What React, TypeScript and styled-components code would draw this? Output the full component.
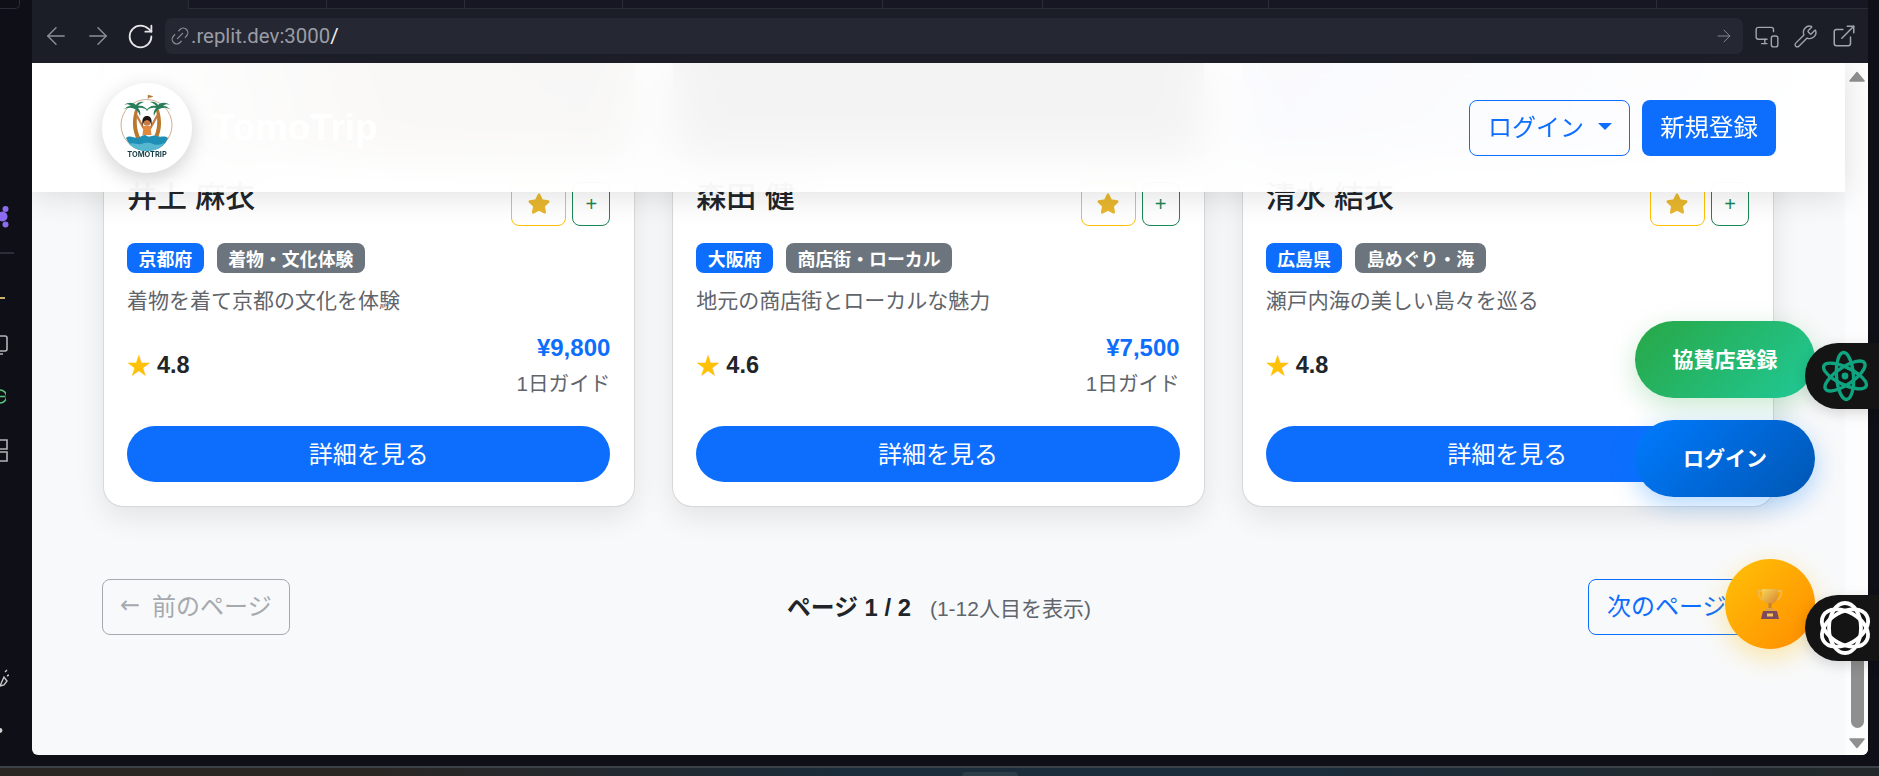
import React from "react"
import styled, { createGlobalStyle } from "styled-components"
import { ArrowLeft, ArrowRight, ExternalLink, Link2, MonitorSmartphone, RotateCw, Wrench } from "lucide-react"

const fontStack = `"Liberation Sans", "Noto Sans CJK JP", sans-serif`

const GlobalStyle = createGlobalStyle`
  html, body {
    margin: 0;
    padding: 0;
    background: #0e0f17;
    overflow: hidden;
    font-family: ${fontStack};
  }
  * {
    box-sizing: border-box;
  }
`

const Shell = styled.div`
  position: relative;
  width: 1879px;
  height: 776px;
  display: flex;
  flex-direction: column;
  overflow: hidden;
  background: #0e0f17;
`

const Desk = styled.div`
  flex: 1;
  min-height: 0;
  display: flex;
  padding-right: 11px;
  padding-bottom: 11px;
`

const Rail = styled.aside`
  width: 32px;
  flex: none;
  overflow: hidden;
  display: flex;
  flex-direction: column;
  align-items: flex-start;
`

const RailTab = styled.div`
  width: 20px;
  height: 9px;
  border: 1px solid #2a2c38;
  border-top: 0;
  border-left: 0;
  border-bottom-right-radius: 5px;
`

const RailIcon = styled.svg<{ $top: number }>`
  display: block;
  flex: none;
  margin-top: ${(p) => p.$top}px;
`

const Pane = styled.div`
  flex: 1;
  min-width: 0;
  display: flex;
  flex-direction: column;
`

const TabStrip = styled.div`
  height: 9px;
  flex: none;
  display: flex;
  background: #161722;
`

const ActiveTab = styled.div`
  width: 156px;
  background: #1b1d27;
`

const TabCell = styled.div<{ $w: number }>`
  width: ${(p) => p.$w}px;
  flex: none;
  border-left: 1px solid #2a2c38;
  border-bottom: 1px solid #2a2c38;
`

const AddressBar = styled.div`
  height: 54px;
  flex: none;
  display: flex;
  align-items: center;
  padding: 0 11px 0 10px;
  background: #1b1d27;
  color: #8d9099;
`

const NavButton = styled.div<{ $w: number }>`
  width: ${(p) => p.$w}px;
  flex: none;
  display: flex;
  align-items: center;
  color: #8d9099;
`

const ReloadButton = styled(NavButton)`
  color: #e4e5e8;
`

const UrlField = styled.div`
  flex: 1;
  height: 36px;
  margin-right: 11px;
  padding: 0 9px 0 4px;
  display: flex;
  align-items: center;
  background: #252832;
  border-radius: 7px;
`

const UrlText = styled.span`
  flex: 1;
  font-family: "Roboto", sans-serif;
  font-size: 20.4px;
  color: #9a9ca5;
`

const UrlSlash = styled.span`
  color: #f2f2f2;
`

const BarTools = styled.div`
  display: flex;
  align-items: center;
  gap: 13px;
  color: #a3a5ad;
`

const Viewport = styled.div`
  position: relative;
  flex: 1;
  min-height: 0;
  display: flex;
  overflow: hidden;
  background: #f8f9fa;
  border-bottom-left-radius: 6px;
  border-bottom-right-radius: 6px;
`

const Page = styled.main`
  flex: 1;
  min-width: 0;
  overflow: hidden;
  padding: 0 71px;
`

const Track = styled.div`
  width: 23px;
  flex: none;
  display: flex;
  flex-direction: column;
  align-items: center;
  padding: 8px 0 6px 1px;
  background: #fdfdfd;
`

const Thumb = styled.div`
  width: 13px;
  height: 108px;
  margin-top: auto;
  margin-bottom: 10px;
  background: #8f8f8f;
  border-radius: 0 0 7px 7px;
`

const TopHeader = styled.header`
  position: absolute;
  top: 0;
  left: 0;
  right: 23px;
  height: 129px;
  display: flex;
  align-items: center;
  padding: 0 69px 0 70px;
  background: rgba(255, 255, 255, 0.92);
  backdrop-filter: blur(22px);
  box-shadow: 0 4px 30px rgba(0, 0, 0, 0.12);
`

const LogoDisc = styled.div`
  width: 90px;
  height: 90px;
  flex: none;
  border-radius: 50%;
  background: #fff;
  box-shadow: 0 6px 20px rgba(0, 0, 0, 0.18);
`

const Brand = styled.div`
  margin-left: 21px;
  flex: 1;
  font-size: 36.7px;
  font-weight: 700;
  color: #fff;
`

const HeaderActions = styled.div`
  display: flex;
  gap: 12px;
`

const LoginButton = styled.button`
  height: 56px;
  width: 161px;
  padding: 0 0 5px 18px;
  display: flex;
  align-items: center;
  background: transparent;
  border: 1.5px solid #0d6efd;
  border-radius: 8px;
  color: #0d6efd;
  font-family: ${fontStack};
  font-size: 24px;
`

const Caret = styled.span`
  margin-left: 14px;
  margin-top: 3px;
  width: 0;
  height: 0;
  border-left: 7px solid transparent;
  border-right: 7px solid transparent;
  border-top: 7px solid #0d6efd;
`

const RegisterButton = styled.button`
  height: 56px;
  width: 134px;
  padding: 0 0 5px;
  background: #0d6efd;
  border: 0;
  border-radius: 8px;
  color: #fff;
  font-family: ${fontStack};
  font-size: 24.4px;
`

const CardGrid = styled.section`
  display: grid;
  grid-template-columns: repeat(3, 1fr);
  gap: 37px;
`

const Card = styled.article`
  overflow: hidden;
  background: #fff;
  border: 1px solid #d8d8d8;
  border-top: 0;
  border-radius: 0 0 20px 20px;
  box-shadow: 0 10px 30px rgba(0, 0, 0, 0.09);
`

const CardImage = styled.div<{ $tone: string }>`
  height: 95px;
  background: ${(p) => p.$tone};
`

const CardBody = styled.div`
  padding: 24px 24px 24px 23px;
`

const NameRow = styled.div`
  height: 44px;
  display: flex;
  align-items: center;
  gap: 6px;
`

const GuideName = styled.h3`
  flex: 1;
  margin: 0 0 14px;
  font-size: 30px;
  font-weight: 500;
  line-height: 30px;
  color: #212529;
`

const IconButton = styled.button<{ $accent: string; $w: number }>`
  width: ${(p) => p.$w}px;
  height: 44px;
  padding: 0;
  display: flex;
  align-items: center;
  justify-content: center;
  background: transparent;
  border: 1px solid ${(p) => p.$accent};
  border-radius: 8px;
  color: ${(p) => p.$accent};
  font-family: ${fontStack};
  font-size: 20px;
`

const Badges = styled.div`
  margin-top: 17px;
  display: flex;
  gap: 13px;
`

const Badge = styled.span<{ $bg: string }>`
  height: 30px;
  padding: 0 11.5px 1px;
  display: flex;
  align-items: center;
  background: ${(p) => p.$bg};
  border-radius: 8px;
  color: #fff;
  font-size: 17.9px;
  font-weight: 700;
`

const Description = styled.p`
  margin: 13px 0 0;
  font-size: 21px;
  line-height: 30px;
  color: #5f656b;
`

const CardFooter = styled.div`
  margin-top: 14px;
  display: flex;
  align-items: center;
  justify-content: space-between;
`

const Rating = styled.div`
  display: flex;
  align-items: center;
  gap: 6px;
  padding-bottom: 1px;
  font-size: 23.5px;
  font-weight: 700;
  color: #212529;
`

const RatingStar = styled.span`
  margin-bottom: 3px;
  font-family: "Noto Sans CJK JP", sans-serif;
  font-size: 24px;
  font-weight: 400;
  line-height: 1;
  color: #ffc107;
`

const PriceBlock = styled.div`
  text-align: right;
`

const Price = styled.div`
  font-size: 24px;
  font-weight: 700;
  line-height: 36px;
  color: #0d6efd;
`

const PriceUnit = styled.div`
  font-size: 20.6px;
  line-height: 36px;
  color: #5f656b;
`

const DetailButton = styled.button`
  display: block;
  width: 100%;
  height: 56px;
  margin-top: 24px;
  padding: 0 0 4px;
  background: #0d6efd;
  border: 0;
  border-radius: 28px;
  color: #fff;
  font-family: ${fontStack};
  font-size: 24px;
`

const Pager = styled.nav`
  margin: 72px -2px 0 -1px;
  display: flex;
  align-items: center;
  justify-content: space-between;
`

const PagerButton = styled.button<{ $disabled?: boolean }>`
  width: 188px;
  height: 56px;
  padding: 0 0 5px ${(p) => (p.$disabled ? 17 : 18)}px;
  display: flex;
  align-items: center;
  gap: ${(p) => (p.$disabled ? 12 : 6)}px;
  background: transparent;
  border: 1px solid ${(p) => (p.$disabled ? "#a6a9ae" : "#0d6efd")};
  border-radius: 8px;
  color: ${(p) => (p.$disabled ? "#a6a9ae" : "#0d6efd")};
  font-family: ${fontStack};
  font-size: 24px;
  white-space: nowrap;
`

const PagerArrow = styled.span`
  font-family: "DejaVu Sans", sans-serif;
`

const PagerInfo = styled.div`
  display: flex;
  align-items: baseline;
  gap: 19px;
  padding-bottom: 4px;
`

const PagerCount = styled.strong`
  font-size: 23.8px;
  color: #212529;
`

const PagerRange = styled.span`
  font-size: 21px;
  color: #5f656b;
`

const FabStack = styled.div`
  position: absolute;
  top: 321px;
  right: 64px;
  display: flex;
  flex-direction: column;
  align-items: flex-end;
  gap: 22px;
`

const Pill = styled.button<{ $from: string; $to: string; $glow: string }>`
  width: 180px;
  height: 77px;
  padding: 0 0 4px;
  background: linear-gradient(135deg, ${(p) => p.$from}, ${(p) => p.$to});
  border: 0;
  border-radius: 39px;
  box-shadow: 0 8px 26px ${(p) => p.$glow};
  color: #fff;
  font-family: ${fontStack};
  font-size: 21px;
  font-weight: 700;
`

const TrophyFab = styled.div`
  width: 90px;
  height: 90px;
  margin-top: 40px;
  display: flex;
  align-items: center;
  justify-content: center;
  background: linear-gradient(135deg, #ffc107, #ff8c00);
  border-radius: 50%;
  box-shadow: 0 8px 26px rgba(255, 193, 7, 0.35);
`

const SideTabs = styled.div`
  position: absolute;
  top: 343px;
  right: 0;
  display: flex;
  flex-direction: column;
  gap: 186px;
`

const SideTab = styled.div`
  width: 74px;
  height: 66px;
  padding-left: 12px;
  display: flex;
  align-items: center;
  background: #141414;
  border-radius: 33px 0 0 33px;
  box-shadow: 0 4px 14px rgba(0, 0, 0, 0.15);
`

const Taskbar = styled.footer`
  height: 10px;
  flex: none;
  position: relative;
  border-top: 2px solid #3c4348;
  background: linear-gradient(90deg, #2a2624 0%, #2a2624 20%, #1b2c3a 45%, #1b2c3a 70%, #23282a 100%);
`

const TaskbarChip = styled.div`
  width: 56px;
  height: 4px;
  margin: 4px 0 0 962px;
  background: #2b3d47;
  border-radius: 4px 4px 0 0;
`

const guides = [
  {
    name: "井上 麻衣",
    pref: "京都府",
    tag: "着物・文化体験",
    text: "着物を着て京都の文化を体験",
    rating: "4.8",
    price: "¥9,800",
    tone: "linear-gradient(90deg, #fff 0%, #e9e9e9 12%, #b5a595 55%, #a59c94 100%)",
  },
  {
    name: "森田 健",
    pref: "大阪府",
    tag: "商店街・ローカル",
    text: "地元の商店街とローカルな魅力",
    rating: "4.6",
    price: "¥7,500",
    tone: "#6c6c6c",
  },
  {
    name: "清水 結衣",
    pref: "広島県",
    tag: "島めぐり・海",
    text: "瀬戸内海の美しい島々を巡る",
    rating: "4.8",
    price: "¥7,500",
    tone: "linear-gradient(90deg, #b9bfe8 0%, #d6daf2 60%, #f2f3fa 100%)",
  },
]

function EmojiStar() {
  return (
    <svg width="26" height="26" viewBox="0 0 24 24">
      <path
        d="M12 3.500l2.600 5.400 5.900.8-4.300 4.100 1.100 5.900L12 17l-5.300 2.700 1.100-5.900-4.300-4.100 5.900-.8z"
        fill="#e8b72e"
        stroke="#e8b72e"
        strokeWidth="2.400"
        strokeLinejoin="round"
      />
    </svg>
  )
}

function TomoLogo() {
  return (
    <svg width="90" height="90" viewBox="0 0 90 90">
      <circle cx="44.500" cy="42" r="25.500" fill="none" stroke="#c49a78" strokeWidth="0.8" />
      <path d="M46 16v-4l5 1.500-5 1.500" fill="#b0793f" stroke="#b0793f" strokeWidth="0.5" />
      <path d="M33 27c-3 10-3 20 2 30l4-1c-5-9-5-19-3-29z" fill="#b9782f" />
      <path d="M57 27c3 10 3 20-2 30l-4-1c5-9 5-19 3-29z" fill="#b9782f" />
      <path
        d="M34 27c-4-3-10-3-14 1 3-3 5-5 9-5-2-2-5-2-7-1 4-3 9-3 12 0 1-2 4-4 8-3-3 1-5 2-6 4 4-1 8 1 10 5-3-3-7-4-10-3 2 2 3 5 2 8-1-3-2-5-4-6z"
        fill="#2a7d5a"
      />
      <path
        d="M56 27c4-3 10-3 14 1-3-3-5-5-9-5 2-2 5-2 7-1-4-3-9-3-12 0-1-2-4-4-8-3 3 1 5 2 6 4-4-1-8 1-10 5 3-3 7-4 10-3-2 2-3 5-2 8 1-3 2-5 4-6z"
        fill="#2a7d5a"
      />
      <path d="M41.500 45L35 33M48.500 45L55 33" fill="none" stroke="#c77c45" strokeWidth="2.200" strokeLinecap="round" />
      <path d="M41.500 43h7l1 9h-9z" fill="#df8a3e" />
      <circle cx="45" cy="39" r="3.800" fill="#c77c45" />
      <path d="M40.500 43c-1-8 1.500-10 4.500-10s5.500 2 4.500 10c-.5-4-2-6-4.500-6s-4 2-4.500 6z" fill="#1e1612" />
      <path d="M24 55c5-4 9 2 14-1 3-2 5-3 7-1 3 2 6-2 10 0 4 2 7-1 11 2-3 8-11 13-21 13s-18-5-21-13z" fill="#1f8fb5" />
      <path d="M27 61c5-2 8 1 12 0s8-2 12 0 8 0 12-1c-4 5-10 8-18 8s-14-3-18-7z" fill="#57b7d0" />
      <text
        x="45"
        y="74"
        textAnchor="middle"
        fontFamily="Inter, sans-serif"
        fontSize="7.400"
        fontWeight="700"
        fill="#173c44"
      >
        TOMOTRIP
      </text>
    </svg>
  )
}

function Trophy() {
  return (
    <svg width="26" height="32" viewBox="0 0 26 32">
      <defs>
        <linearGradient id="cup" x1="0" y1="0" x2="1" y2="1">
          <stop offset="0" stopColor="#f6d55c" />
          <stop offset="1" stopColor="#d9822b" />
        </linearGradient>
      </defs>
      <path d="M5 3H1.500c0 5 2 8 5 9M21 3h3.500c0 5-2 8-5 9" fill="none" stroke="#eeb84a" strokeWidth="1.800" />
      <path d="M5 1h16v6c0 6-4 9-8 9s-8-3-8-9z" fill="url(#cup)" />
      <path d="M11.500 15h3v6h-3z" fill="#c9802f" />
      <path d="M9 20h8l1 3H8z" fill="#e3a23c" />
      <path d="M6 23h14l2 8H4z" fill="#7d4a5e" />
      <path d="M10 25.500h6v3h-6z" fill="#f3c45a" />
    </svg>
  )
}

function AtomIcon() {
  return (
    <svg width="56" height="56" viewBox="-28 -28 56 56">
      <g fill="none" stroke="#10a37f" strokeWidth="3.400">
        <ellipse rx="23.500" ry="8.500" transform="rotate(26)" />
        <ellipse rx="23.500" ry="8.500" transform="rotate(86)" />
        <ellipse rx="23.500" ry="8.500" transform="rotate(146)" />
      </g>
      <circle r="3.400" fill="#10a37f" />
    </svg>
  )
}

function FlowerIcon() {
  return (
    <svg width="56" height="56" viewBox="-28 -28 56 56">
      <g fill="none" stroke="#fff" strokeWidth="3.800">
        <ellipse rx="25" ry="16" transform="rotate(30)" />
        <ellipse rx="25" ry="16" transform="rotate(90)" />
        <ellipse rx="25" ry="16" transform="rotate(150)" />
      </g>
    </svg>
  )
}

export default function App() {
  return (
    <Shell>
      <GlobalStyle />
      <Desk>
        <Rail>
          <RailTab />
          <RailIcon $top={196} width="9" height="23" viewBox="0 0 9 23">
            <circle cx="5.500" cy="4" r="3" fill="#8b6cf0" />
            <circle cx="2.500" cy="11.500" r="5" fill="#8b6cf0" />
            <circle cx="5.500" cy="19.500" r="3" fill="#8b6cf0" />
          </RailIcon>
          <RailIcon $top={24} width="14" height="2" viewBox="0 0 14 2">
            <rect width="14" height="2" fill="#2b2d38" />
          </RailIcon>
          <RailIcon $top={43} width="5" height="2" viewBox="0 0 5 2">
            <rect width="5" height="2" fill="#c9b36b" />
          </RailIcon>
          <RailIcon $top={36} width="8" height="20" viewBox="0 0 8 20">
            <path d="M0 1h5a2 2 0 0 1 2 2v11a2 2 0 0 1-2 2H0M0 19h3" fill="none" stroke="#b5b5b5" strokeWidth="1.600" />
          </RailIcon>
          <RailIcon $top={34} width="6" height="15" viewBox="0 0 6 15">
            <path d="M0 1a6.500 6.500 0 0 1 0 13M0 7.500h5" fill="none" stroke="#57c87a" strokeWidth="1.500" />
          </RailIcon>
          <RailIcon $top={35} width="8" height="23" viewBox="0 0 8 23">
            <path d="M0 1h7v9H0M0 13h7v9H0" fill="none" stroke="#b5b5b5" strokeWidth="1.600" />
          </RailIcon>
          <RailIcon $top={207} width="9" height="19" viewBox="0 0 9 19">
            <path d="M0 17l4-9 3 4-3 4zM5 3l2-2M7 7l2-1" fill="none" stroke="#c9c9c9" strokeWidth="1.400" />
          </RailIcon>
          <RailIcon $top={40} width="3" height="5" viewBox="0 0 3 5">
            <circle cx="0" cy="2.500" r="2.400" fill="#d0d0d0" />
          </RailIcon>
        </Rail>

        <Pane>
          <TabStrip>
            <ActiveTab />
            <TabCell $w={138} />
            <TabCell $w={138} />
            <TabCell $w={158} />
            <TabCell $w={260} />
            <TabCell $w={160} />
            <TabCell $w={226} />
            <TabCell $w={388} />
            <TabCell $w={212} />
          </TabStrip>
          <AddressBar>
            <NavButton $w={42}>
              <ArrowLeft size={28} strokeWidth={1.2} />
            </NavButton>
            <NavButton $w={42}>
              <ArrowRight size={28} strokeWidth={1.2} />
            </NavButton>
            <ReloadButton $w={39}>
              <RotateCw size={29} strokeWidth={1.5} />
            </ReloadButton>
            <UrlField>
              <Link2 size={22} strokeWidth={1.300} transform="rotate(-45)" />
              <UrlText>
                .replit.dev:3000<UrlSlash>/</UrlSlash>
              </UrlText>
              <ArrowRight size={20} strokeWidth={1.100} />
            </UrlField>
            <BarTools>
              <MonitorSmartphone size={26} strokeWidth={1.300} />
              <Wrench size={25} strokeWidth={1.300} />
              <ExternalLink size={26} strokeWidth={1.400} />
            </BarTools>
          </AddressBar>

          <Viewport>
            <Page>
              <CardGrid>
                {guides.map((g) => (
                  <Card key={g.name}>
                    <CardImage $tone={g.tone} />
                    <CardBody>
                      <NameRow>
                        <GuideName>{g.name}</GuideName>
                        <IconButton $accent="#ffc107" $w={55}>
                          <EmojiStar />
                        </IconButton>
                        <IconButton $accent="#198754" $w={38}>
                          +
                        </IconButton>
                      </NameRow>
                      <Badges>
                        <Badge $bg="#0d6efd">{g.pref}</Badge>
                        <Badge $bg="#6c757d">{g.tag}</Badge>
                      </Badges>
                      <Description>{g.text}</Description>
                      <CardFooter>
                        <Rating>
                          <RatingStar>★</RatingStar>
                          {g.rating}
                        </Rating>
                        <PriceBlock>
                          <Price>{g.price}</Price>
                          <PriceUnit>1日ガイド</PriceUnit>
                        </PriceBlock>
                      </CardFooter>
                      <DetailButton>詳細を見る</DetailButton>
                    </CardBody>
                  </Card>
                ))}
              </CardGrid>

              <Pager>
                <PagerButton $disabled>
                  <PagerArrow>←</PagerArrow>前のページ
                </PagerButton>
                <PagerInfo>
                  <PagerCount>ページ 1 / 2</PagerCount>
                  <PagerRange>(1-12人目を表示)</PagerRange>
                </PagerInfo>
                <PagerButton>
                  次のページ<PagerArrow>→</PagerArrow>
                </PagerButton>
              </Pager>
            </Page>

            <Track>
              <svg width="16" height="11" viewBox="0 0 16 11">
                <path d="M8 1.500L15 10H1z" fill="#8f8f8f" stroke="#8f8f8f" strokeWidth="1.500" strokeLinejoin="round" />
              </svg>
              <Thumb />
              <svg width="16" height="11" viewBox="0 0 16 11">
                <path d="M8 9.500L1 1h14z" fill="#8f8f8f" stroke="#8f8f8f" strokeWidth="1.500" strokeLinejoin="round" />
              </svg>
            </Track>

            <TopHeader>
              <LogoDisc>
                <TomoLogo />
              </LogoDisc>
              <Brand>TomoTrip</Brand>
              <HeaderActions>
                <LoginButton>
                  ログイン
                  <Caret />
                </LoginButton>
                <RegisterButton>新規登録</RegisterButton>
              </HeaderActions>
            </TopHeader>
          </Viewport>
        </Pane>
      </Desk>
      <Taskbar>
        <TaskbarChip />
      </Taskbar>

      <FabStack>
        <Pill $from="#28a745" $to="#20c997" $glow="rgba(40, 167, 69, 0.25)">
          協賛店登録
        </Pill>
        <Pill $from="#007bff" $to="#0056b3" $glow="rgba(0, 123, 255, 0.3)">
          ログイン
        </Pill>
        <TrophyFab>
          <Trophy />
        </TrophyFab>
      </FabStack>

      <SideTabs>
        <SideTab>
          <AtomIcon />
        </SideTab>
        <SideTab>
          <FlowerIcon />
        </SideTab>
      </SideTabs>
    </Shell>
  )
}
